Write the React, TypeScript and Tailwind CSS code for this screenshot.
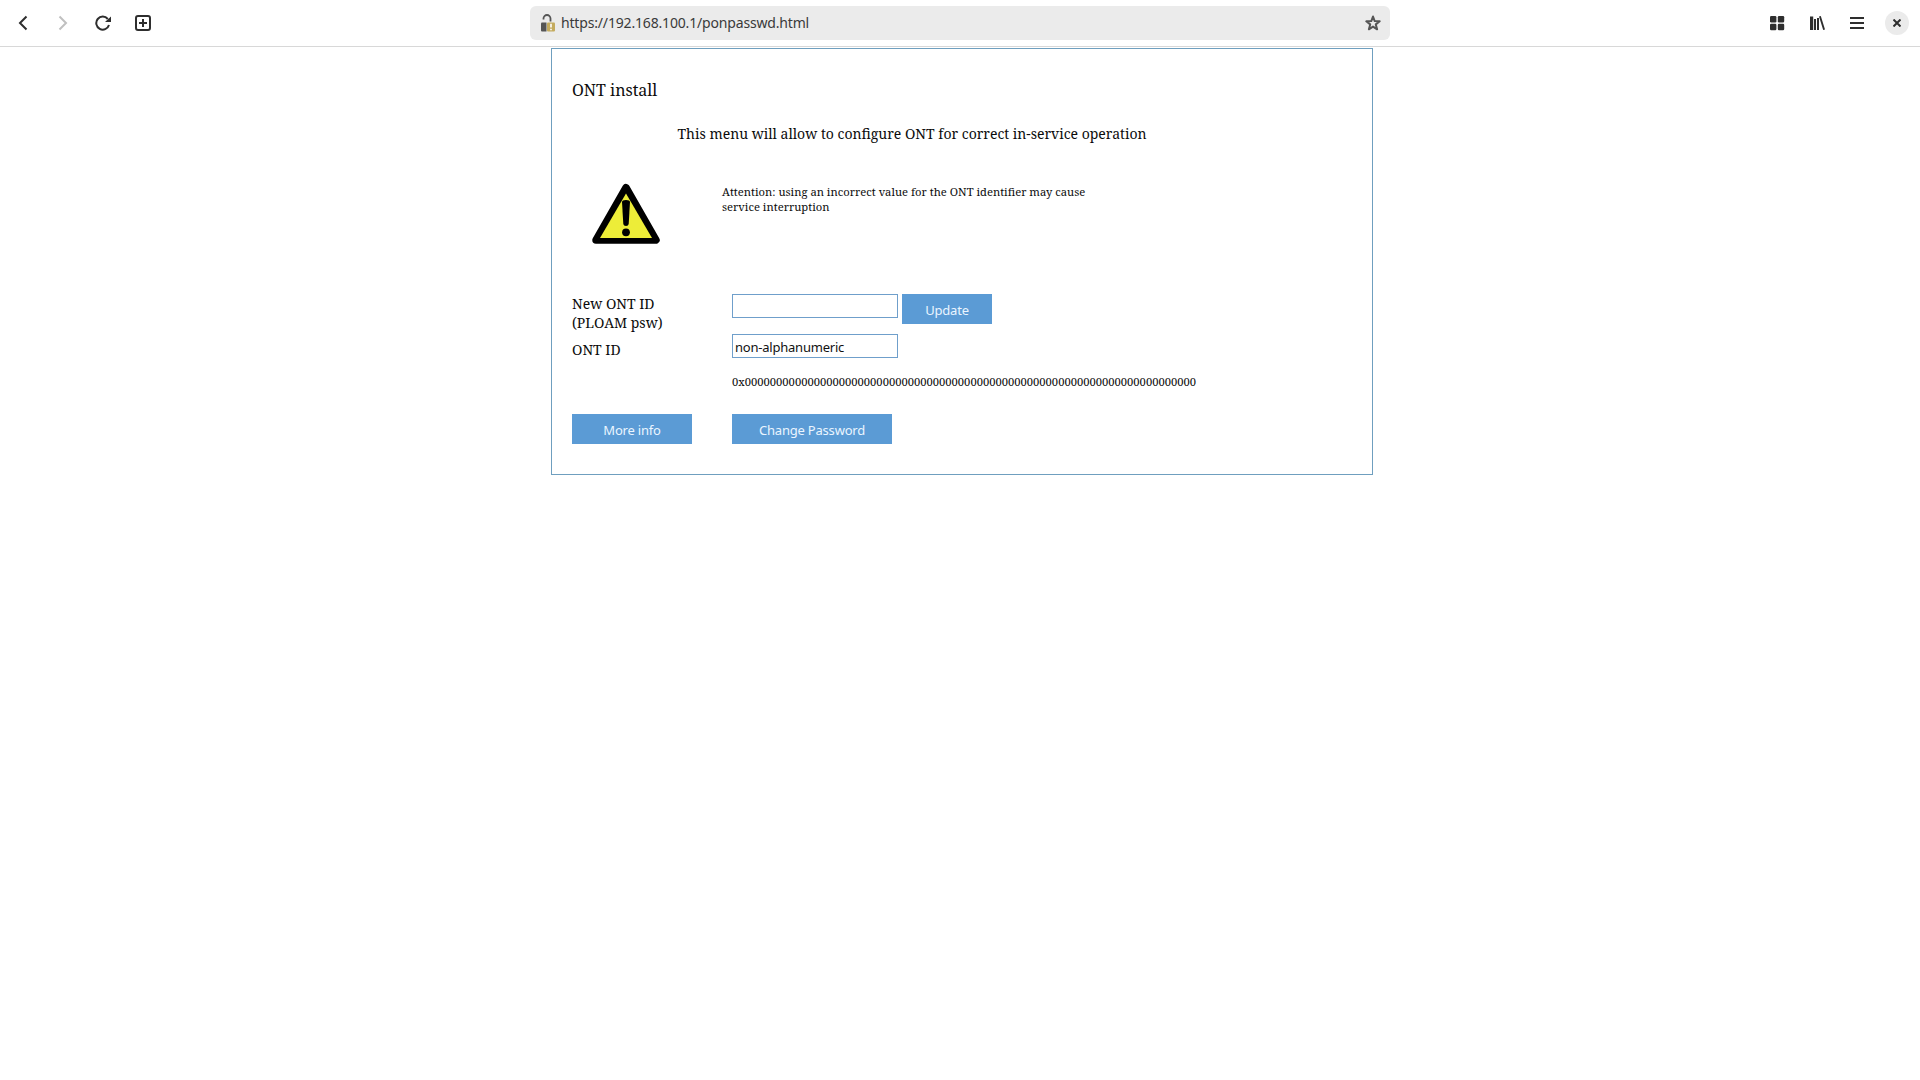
import React from "react";

const serif = "font-['Noto_Serif','DejaVu_Serif_Condensed','DejaVu_Serif',serif] text-[#0c0c0c]";
const sans = "font-['Noto_Sans',sans-serif]";

function BrowserBar() {
  return (
    <header className="flex h-[47px] w-full items-start border-b border-[#d8d8d8] bg-white">
      <div className="flex h-[46px] w-[530px] items-center text-[#2e2e2e]">
        <svg className="ml-[15px]" width="16" height="16" viewBox="0 0 16 16" fill="none" stroke="currentColor" strokeWidth="2">
          <path d="M11.500 1.500 5 8l6.500 6.500" />
        </svg>
        <svg className="ml-6" width="16" height="16" viewBox="0 0 16 16" fill="none" stroke="#c0c0c0" strokeWidth="2">
          <path d="M4.500 1.500 11 8l-6.500 6.500" />
        </svg>
        <svg className="ml-6" width="16" height="16" viewBox="0 0 16 16" fill="none" stroke="currentColor" strokeWidth="2">
          <path d="M12.800 4A6.500 6.500 0 1 0 14 10" />
          <path d="M10 7h6V1.500z" fill="currentColor" stroke="none" />
        </svg>
        <svg className="ml-6" width="16" height="16" viewBox="0 0 16 16" fill="none" stroke="currentColor" strokeWidth="2">
          <rect x="1" y="1" width="14" height="14" rx="2" />
          <path d="M4 8h8M8 4v8" />
        </svg>
      </div>
      <div className="mt-[6px] flex h-[34px] w-[860px] items-center rounded-[6px] bg-[#ebebeb]">
        <svg className="ml-[10px]" width="16" height="18" viewBox="0 0 16 18">
          <path d="M3.500 5.500V4.500a3.500 3.500 0 0 1 7 0V7.500" fill="none" stroke="#555" strokeWidth="1.800" />
          <path d="M1 9.500q0-1 1-1h4.500v9H2q-1 0-1-1z" fill="#555" />
          <rect x="7" y="8.500" width="8" height="9" rx="1" fill="#c4ab5e" />
          <path d="M11 9.800v3.700M11 14.700v1.600" stroke="#fff" strokeWidth="1.600" />
        </svg>
        <span className={`${sans} -mt-px ml-[5px] text-[14px] leading-[20px] tracking-[-0.170px] text-[#3a3a3a] whitespace-nowrap`}>
          https://192.168.100.1/ponpasswd.html
        </span>
        <svg className="ml-auto mr-[9px]" width="16" height="16" viewBox="0 0 16 16" fill="none" stroke="#555" strokeWidth="2" strokeLinejoin="round">
          <path d="m8 1.500 1.700 4.600 5 .2-3.900 3.100 1.300 4.900L8 11.600l-4.100 2.700 1.300-4.900L1.300 6.300l5-.2z" />
        </svg>
      </div>
      <div className="flex h-[46px] flex-1 items-center justify-end text-[#2e2e2e]">
        <svg width="16" height="16" viewBox="0 0 16 16" fill="currentColor">
          <rect x="1" y="1" width="6.400" height="6.400" rx="1.200" />
          <rect x="8.800" y="1" width="6.400" height="6.400" rx="1.200" />
          <rect x="1" y="8.800" width="6.400" height="6.400" rx="1.200" />
          <rect x="8.800" y="8.800" width="6.400" height="6.400" rx="1.200" />
        </svg>
        <svg className="ml-6" width="16" height="16" viewBox="0 0 16 16" fill="currentColor">
          <path d="M1 1.500h3.200V15H1zM5 4h2v11H5zM8 3h2v12H8zM10 1.400l1.800-.5L16 14.500l-1.800.5z" />
        </svg>
        <svg className="ml-6" width="16" height="16" viewBox="0 0 16 16" fill="currentColor">
          <path d="M1 2h14v2H1zM1 7h14v2H1zM1 12h14v2H1z" />
        </svg>
        <div className="mr-[11px] ml-5 flex size-6 items-center justify-center rounded-full bg-[#ebebeb]">
          <svg width="8" height="8" viewBox="0 0 8 8" stroke="currentColor" strokeWidth="2">
            <path d="m.500.500 7 7M7.500.500l-7 7" />
          </svg>
        </div>
      </div>
    </header>
  );
}

function WarningSign() {
  return (
    <svg width="70" height="62" viewBox="0 0 70 62">
      <path d="M35 5.700 65 58H5z" fill="#000" stroke="#000" strokeWidth="7.500" strokeLinejoin="round" />
      <path d="M35 11.500 61 56H9z" fill="#eded38" />
      <path d="M31 20q0-2 4-2t4 2l-1.300 22q-.3 2-2.700 2t-2.700-2z" fill="#000" />
      <circle cx="35" cy="50.300" r="3.900" fill="#000" />
    </svg>
  );
}

const button = `${sans} h-[30px] bg-[#5b9bd5] text-[13px] tracking-[-0.200px] leading-[32px] text-[#eaf5ff] text-center`;
const field = `${sans} block h-6 w-[166px] rounded-none border border-[#6f9fcb] bg-white px-[2px] pt-[2px] text-[13px] tracking-[-0.220px] text-[#111] outline-none`;

export default function App() {
  return (
    <div className="min-h-[1080px] w-full bg-white">
      <BrowserBar />
      <main className="mt-px ml-[551px] flex h-[427px] w-[822px] flex-col border border-[#6f9fbf] bg-white pl-[20px]">
        <h1 className={`${serif} mt-[30px] h-[22px] text-[16px] leading-[22px] whitespace-nowrap`}>ONT install</h1>
        <p className={`${serif} mt-[23px] ml-[105.500px] h-[20px] text-[14px] leading-[20px] whitespace-nowrap`}>
          This menu will allow to configure ONT for correct in-service operation
        </p>
        <div className="mt-[38px] flex h-[111px]">
          <div className="ml-[19px] w-[131px]"><WarningSign /></div>
          <p className={`${serif} mt-[2px] text-[11.220px] leading-[15px] whitespace-nowrap`}>
            Attention: using an incorrect value for the ONT identifier may cause
            <br />
            service interruption
          </p>
        </div>
        <div className="mt-px grid grid-cols-[160px_1fr]">
          <div className={`${serif} text-[14px] leading-[19px]`}>
            <div>New ONT ID</div>
            <div>(PLOAM psw)</div>
            <div className="mt-[8px]">ONT ID</div>
          </div>
          <div>
            <div className="flex gap-[4px]">
              <input className={field} />
              <button className={`${button} w-[90px]`}>Update</button>
            </div>
            <input className={`${field} mt-[10px]`} defaultValue="non-alphanumeric" />
            <div className={`${serif} mt-[16px] h-[15px] text-[11.200px] leading-[15px] tracking-[0.014px] whitespace-nowrap`}>
              0x{"0".repeat(72)}
            </div>
          </div>
        </div>
        <div className="mt-[25px] flex gap-10">
          <button className={`${button} w-[120px]`}>More info</button>
          <button className={`${button} w-[160px]`}>Change Password</button>
        </div>
      </main>
    </div>
  );
}
